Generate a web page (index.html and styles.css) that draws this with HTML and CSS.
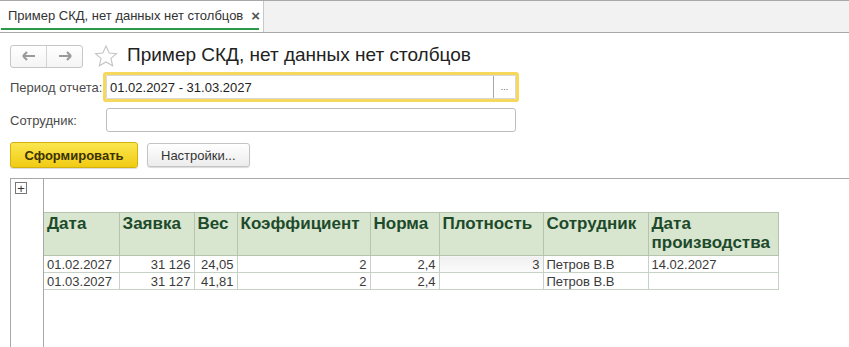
FILE: index.html
```html
<!DOCTYPE html>
<html lang="ru">
<head>
  <meta charset="UTF-8" />
  <title>Пример СКД, нет данных нет столбцов</title>
  <link rel="stylesheet" href="styles.css">
</head>
<body>

  <div class="tabbar">
    <div class="tab">
      <span>Пример СКД, нет данных нет столбцов</span>
      <span class="tab-close">×</span>
    </div>
  </div>

  <div class="head">
    <div class="nav">
      <button class="nav-btn">
        <svg width="14" height="10" viewBox="0 0 14 10"><path d="M1 5h12M1 5l4-4M1 5l4 4" fill="none" stroke="#9a9a9a" stroke-width="2.2"/></svg>
      </button>
      <button class="nav-btn">
        <svg width="14" height="10" viewBox="0 0 14 10"><path d="M13 5H1M13 5L9 1M13 5L9 9" fill="none" stroke="#9a9a9a" stroke-width="2.2"/></svg>
      </button>
    </div>
    <svg class="star" width="24" height="22" viewBox="0 0 24 22"><path d="M12 1l3.2 7 7.3.6-5.6 4.8 1.8 7.4L12 16.9 5.3 20.8l1.8-7.4L1.5 8.6 8.8 8z" fill="none" stroke="#c4c4c4" stroke-width="1.1"/></svg>
    <h1>Пример СКД, нет данных нет столбцов</h1>
  </div>

  <div class="form">
    <div class="row">
      <label>Период отчета:</label>
      <div class="field focused">
        <span class="value">01.02.2027 - 31.03.2027</span>
        <span class="choose">...</span>
      </div>
    </div>
    <div class="row">
      <label>Сотрудник:</label>
      <div class="field"></div>
    </div>
    <div class="actions">
      <button class="btn primary">Сформировать</button>
      <button class="btn">Настройки...</button>
    </div>
  </div>

  <div class="report">
    <div class="gutter">
      <span class="expand">+</span>
    </div>
    <div class="sheet">
      <table>
        <colgroup>
          <col style="width:75px"><col style="width:75px"><col style="width:43px"><col style="width:133px">
          <col style="width:69px"><col style="width:104px"><col style="width:105px"><col style="width:130px">
        </colgroup>
        <thead>
          <tr>
            <th>Дата</th><th>Заявка</th><th>Вес</th><th>Коэффициент</th>
            <th>Норма</th><th>Плотность</th><th>Сотрудник</th><th>Дата производства</th>
          </tr>
        </thead>
        <tbody>
          <tr>
            <td>01.02.2027</td><td class="num">31 126</td><td class="num">24,05</td><td class="num">2</td>
            <td class="num">2,4</td><td class="num shaded">3</td><td>Петров В.В</td><td>14.02.2027</td>
          </tr>
          <tr>
            <td>01.03.2027</td><td class="num">31 127</td><td class="num">41,81</td><td class="num">2</td>
            <td class="num">2,4</td><td class="num"></td><td>Петров В.В</td><td></td>
          </tr>
        </tbody>
      </table>
    </div>
  </div>

</body>
</html>
```

FILE: styles.css
```css
* {
  box-sizing: border-box;
}

html, body {
  height: 100%;
}

body {
  margin: 0;
  font-family: "Liberation Sans", Arial, sans-serif;
  font-size: 13px;
  color: #333;
  background: #fff;
  display: flex;
  flex-direction: column;
  overflow: hidden;
}

/* Tabs */
.tabbar {
  height: 33px;
  background: #f2f2f2;
  border-top: 1px solid #a8a8a8;
  border-bottom: 1px solid #a8a8a8;
  display: flex;
}

.tab {
  width: 264px;
  background: #fff;
  border-right: 1px solid #c8c8c8;
  display: flex;
  align-items: center;
  gap: 8px;
  padding: 0 0 3px 8px;
  position: relative;
}

.tab::after {
  content: "";
  position: absolute;
  left: 1px;
  right: 4px;
  bottom: 2px;
  height: 2px;
  background: #2a9a4a;
}

.tab-close {
  font-weight: bold;
  font-size: 15px;
  color: #555;
}

/* Header */
.head {
  display: flex;
  align-items: center;
  padding: 8px 10px 0;
  height: 38px;
}

.nav {
  display: flex;
  width: 73px;
  height: 23px;
  border: 1px solid #c6c6c6;
  border-radius: 3px;
  background: linear-gradient(#fff, #f4f4f4);
}

.nav-btn {
  flex: 1;
  border: none;
  background: none;
  padding: 0;
  display: flex;
  align-items: center;
  justify-content: center;
}

.nav-btn + .nav-btn {
  border-left: 1px solid #d4d4d4;
}

.star {
  margin-left: 11px;
}

h1 {
  margin: 0 0 2px 9px;
  font-size: 19px;
  font-weight: normal;
  color: #222;
}

/* Form */
.form {
  padding: 0 10px;
  display: flex;
  flex-direction: column;
}

.row {
  display: flex;
  align-items: center;
  height: 30px;
  margin-top: 1px;
}

.row + .row {
  margin-top: 6px;
  height: 24px;
}

label {
  width: 96px;
  color: #4a4a4a;
}

.field {
  width: 410px;
  height: 24px;
  border: 1px solid #bdbdbd;
  border-radius: 3px;
  display: flex;
  align-items: center;
}

.field.focused {
  border-color: #d8d8d8;
  box-shadow: 0 0 0 3px #f6d85c;
  border-radius: 1px;
}

.value {
  flex: 1;
  padding-left: 3px;
  color: #222;
}

.choose {
  width: 22px;
  height: 100%;
  border-left: 1px solid #a8a8a8;
  font-size: 9px;
  color: #666;
  display: flex;
  align-items: center;
  justify-content: center;
}

.actions {
  display: flex;
  gap: 9px;
  margin-top: 10px;
  align-items: center;
}

.btn {
  font-family: inherit;
  font-size: 13px;
  height: 24px;
  padding: 0 13px;
  border: 1px solid #c4c4c4;
  border-radius: 3px;
  background: linear-gradient(#fff, #ececec);
  color: #333;
  box-shadow: 0 1px 1px rgba(0, 0, 0, 0.15);
}

.btn.primary {
  height: 26px;
  width: 128px;
  font-weight: bold;
  color: #3a3200;
  background: linear-gradient(#fbe64f, #f0cb14);
  border-color: #d4b20e;
}

/* Report */
.report {
  flex: 1;
  margin: 10px 0 0 10px;
  border-top: 1px solid #a8a8a8;
  border-left: 1px solid #a8a8a8;
  display: flex;
}

.gutter {
  width: 33px;
  border-right: 1px solid #a8a8a8;
  padding: 3px 0 0 4px;
}

.expand {
  display: flex;
  width: 12px;
  height: 12px;
  border: 1px solid #777;
  align-items: center;
  justify-content: center;
  font-size: 13px;
  line-height: 1;
  color: #333;
}

.sheet {
  padding-top: 33px;
}

table {
  border-collapse: collapse;
  table-layout: fixed;
}

th {
  background: #d8e5cf;
  color: #1d4a2a;
  font-size: 17px;
  text-align: left;
  vertical-align: top;
  height: 43px;
  line-height: 19px;
  padding: 1px 3px 0;
  border: 1px solid #b4c4b0;
  border-left-color: #b8c6b4;
}

th:first-child, td:first-child {
  border-left: none;
}

td {
  height: 17px;
  padding: 0 3px;
  line-height: 15px;
  border: 1px solid #c6d2c6;
  white-space: nowrap;
  color: #3a3a3a;
}

td.num {
  text-align: right;
}

td.shaded {
  background: linear-gradient(#f0f0f0, #fbfbfb);
}
```
